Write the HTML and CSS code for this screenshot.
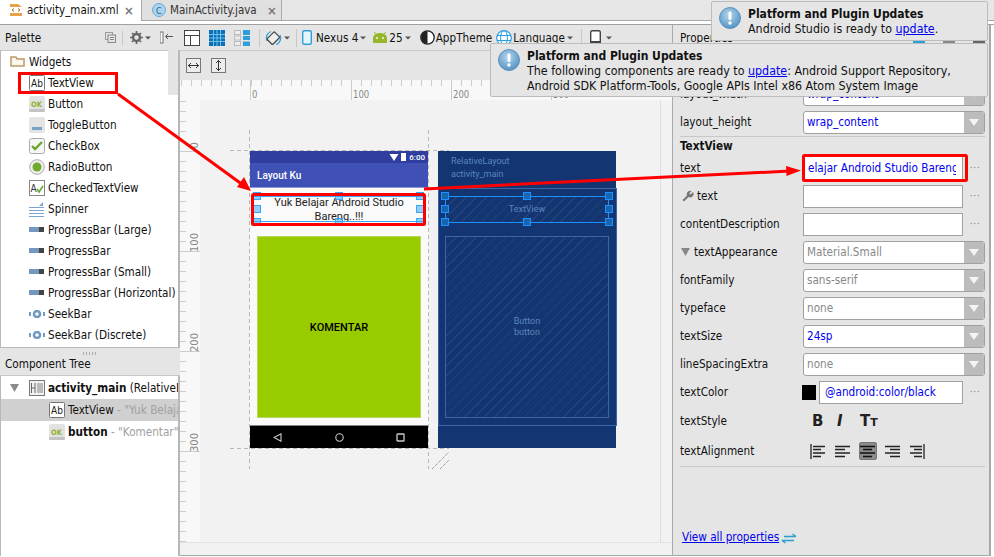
FILE: index.html
```html
<!DOCTYPE html>
<html lang="en">
<head>
<meta charset="utf-8">
<title>activity_main.xml</title>
<link rel="stylesheet" href="styles.css">
</head>
<body>
<svg class="defs" aria-hidden="true">
  <defs>
    <symbol id="i-ab" viewBox="0 0 16 16"><rect x=".5" y=".5" width="15" height="15" rx="1" fill="#fff" stroke="#777"/><text x="2" y="12" font-family="DejaVu Sans" font-size="10" fill="#222">Ab</text></symbol>
    <symbol id="i-ok" viewBox="0 0 16 16"><rect width="16" height="16" rx="2" fill="#e2e2e2"/><rect y="13" width="16" height="3" rx="1" fill="#c4c4c4"/><text x="2" y="11" font-family="DejaVu Sans" font-weight="700" font-size="7.5" fill="#8fae2c">OK</text></symbol>
    <symbol id="i-toggle" viewBox="0 0 16 16"><rect width="16" height="16" rx="2" fill="#e4e4e4"/><rect x="3" y="10" width="10" height="3" fill="#7aa0c8"/></symbol>
    <symbol id="i-check" viewBox="0 0 16 16"><rect x=".5" y=".5" width="15" height="15" rx="2" fill="#f6f6f6" stroke="#aaa"/><path d="M3 8l3 3 7-7" fill="none" stroke="#6aa82a" stroke-width="2.4"/></symbol>
    <symbol id="i-radio" viewBox="0 0 16 16"><circle cx="8" cy="8" r="7.3" fill="#efefef" stroke="#aaa"/><circle cx="8" cy="8" r="4.5" fill="#70a92c"/></symbol>
    <symbol id="i-ctv" viewBox="0 0 16 16"><rect x=".5" y=".5" width="15" height="15" fill="#fff" stroke="#888"/><text x="1.500" y="12" font-family="DejaVu Sans" font-size="10" fill="#333">A</text><path d="M8 9l2 3 4-6" fill="none" stroke="#6aa82a" stroke-width="1.600"/></symbol>
    <symbol id="i-spin" viewBox="0 0 16 16"><path d="M0 6.500h15M0 9.500h15M0 12.500h15M0 15.500h15" stroke="#7da4cc"/><path d="M10 5l4-4v4z" fill="#7da4cc"/></symbol>
    <symbol id="i-prog" viewBox="0 0 16 6"><rect width="10" height="5" fill="#7298c0"/><rect x="10" width="5" height="5" fill="#444"/></symbol>
    <symbol id="i-seek" viewBox="0 0 16 8"><path d="M1 2v4M15 2v4" stroke="#6f9ac4" stroke-width="2"/><circle cx="8" cy="4" r="3" fill="none" stroke="#6f9ac4" stroke-width="2.600"/></symbol>
    <symbol id="i-info" viewBox="0 0 22 22"><defs><radialGradient id="g-info" cx=".45" cy=".35" r=".7"><stop offset="0" stop-color="#b6d6ee"/><stop offset="1" stop-color="#4c8fc1"/></radialGradient></defs><circle cx="11" cy="11" r="10.500" fill="url(#g-info)" stroke="#5b93bd"/><rect x="9.500" y="4.500" width="3" height="8.500" rx="1.200" fill="#fff"/><circle cx="11" cy="16" r="1.700" fill="#fff"/></symbol>
    <symbol id="i-caret" viewBox="0 0 6 4"><path d="M0 .5h6L3 3.500z" fill="#555"/></symbol>
    <symbol id="i-dd" viewBox="0 0 10 7"><path d="M0 0h10L5 7z" fill="#f4f4f4"/></symbol>
  </defs>
</svg>

<div class="ide">
  <header class="tabs">
    <div class="tab tab-on">
      <svg class="tab-ico" viewBox="0 0 14 14"><path d="M1 1h8l4 3v9H1z" fill="#e8a04a"/><rect x="1" y="4" width="12" height="6" fill="#fff"/><path d="M5 5.500L3 7l2 1.500M9 5.500L11 7 9 8.500" fill="none" stroke="#b06a1c"/></svg>
      <span class="tab-name">activity_main.xml</span><span class="tab-x">×</span>
    </div>
    <div class="tab tab-off">
      <svg class="tab-ico" viewBox="0 0 14 14"><circle cx="7" cy="7" r="6.500" fill="#a9d3ef" stroke="#6aa8d6"/><text x="4" y="10.500" font-family="DejaVu Sans" font-size="9" fill="#2c5d86">C</text></svg>
      <span class="tab-name">MainActivity.java</span><span class="tab-x">×</span>
    </div>
  </header>

  <div class="work">
    <aside class="left">
      <div class="pal-head">
        <span class="head-title">Palette</span>
        <span class="pal-tools">
          <svg class="ico11" viewBox="0 0 11 11"><rect x=".5" y=".5" width="7" height="7" fill="none" stroke="#999"/><rect x="3" y="3" width="7.500" height="7.500" fill="#e5e5e5" stroke="#888"/><path d="M5 5.500h4M5 7.500h4" stroke="#888"/></svg>
          <i class="sep-short"></i>
          <svg class="ico13" viewBox="0 0 13 13"><circle cx="6.500" cy="6.500" r="3.500" fill="none" stroke="#666" stroke-width="2.500"/><path d="M6.500 0v13M0 6.500h13M2 2l9 9M11 2l-9 9" stroke="#666" stroke-width="1.700" stroke-dasharray="2.200 8.600 2.200"/></svg>
          <svg class="caret" viewBox="0 0 6 4"><use href="#i-caret"/></svg>
          <svg class="ico13 pin" viewBox="0 0 13 13"><rect x="0" y="1" width="3" height="11" fill="#fff" stroke="#777"/><path d="M13 5.500H6M8 3L5.500 5.500 8 8" fill="none" stroke="#555"/></svg>
        </span>
      </div>
      <div class="pal-body">
        <ul class="pal-list">
          <li class="pal-group"><svg class="folder" viewBox="0 0 15 11"><path d="M1 10V1h5l1 2h7v7z" fill="#fbf7ef" stroke="#bd9b66" stroke-width="1.500"/></svg>Widgets</li>
          <li><svg class="pi"><use href="#i-ab"/></svg>TextView</li>
          <li><svg class="pi"><use href="#i-ok"/></svg>Button</li>
          <li><svg class="pi"><use href="#i-toggle"/></svg>ToggleButton</li>
          <li><svg class="pi"><use href="#i-check"/></svg>CheckBox</li>
          <li><svg class="pi"><use href="#i-radio"/></svg>RadioButton</li>
          <li><svg class="pi"><use href="#i-ctv"/></svg>CheckedTextView</li>
          <li><svg class="pi"><use href="#i-spin"/></svg>Spinner</li>
          <li><svg class="pi pi-bar"><use href="#i-prog"/></svg>ProgressBar (Large)</li>
          <li><svg class="pi pi-bar"><use href="#i-prog"/></svg>ProgressBar</li>
          <li><svg class="pi pi-bar"><use href="#i-prog"/></svg>ProgressBar (Small)</li>
          <li><svg class="pi pi-bar"><use href="#i-prog"/></svg>ProgressBar (Horizontal)</li>
          <li><svg class="pi pi-seek"><use href="#i-seek"/></svg>SeekBar</li>
          <li><svg class="pi pi-seek"><use href="#i-seek"/></svg>SeekBar (Discrete)</li>
        </ul>
        <div class="pal-scroll"></div>
      </div>
      <div class="split"><span class="grip"></span></div>
      <div class="tree-head">Component Tree</div>
      <div class="tree">
        <div class="tree-row">
          <svg class="tw" viewBox="0 0 9 8"><path d="M0 0h9L4.500 8z" fill="#8a8a8a"/></svg>
          <svg class="pi" viewBox="0 0 16 16"><rect x=".5" y=".5" width="15" height="15" fill="#f2f2f2" stroke="#777"/><path d="M2.500 3v10M6 3v10M6 8H2.500" fill="none" stroke="#666"/><rect x="8" y="3" width="6" height="10" fill="#bbb"/></svg>
          <b>activity_main</b>&nbsp;(RelativeLayout)
        </div>
        <div class="tree-row sub selected"><svg class="pi"><use href="#i-ab"/></svg>TextView<span class="muted">&nbsp;- "Yuk Belajar Android Studio Bareng..!!!"</span></div>
        <div class="tree-row sub"><svg class="pi"><use href="#i-ok"/></svg><b>button</b><span class="muted">&nbsp;- "Komentar"</span></div>
      </div>
    </aside>

    <main class="center">
      <div class="toolbar">
        <svg class="tool16" viewBox="0 0 16 16"><rect x=".5" y=".5" width="15" height="15" fill="#fff" stroke="#444"/><path d="M.5 5.500h15M6.500 5.500v10" stroke="#444"/></svg>
        <svg class="tool16" viewBox="0 0 16 16"><rect width="16" height="16" fill="#0f6fb4"/><path d="M4.500 0v16M8 0v16M11.500 0v16M0 4.500h16M0 8h16M0 11.500h16" stroke="#6cc3ee"/></svg>
        <svg class="tool16" viewBox="0 0 16 16"><rect x=".5" y=".5" width="6" height="4" fill="#eee" stroke="#bbb"/><rect x=".5" y="6" width="6" height="4" fill="#eee" stroke="#bbb"/><rect x=".5" y="11.500" width="6" height="4" fill="#eee" stroke="#bbb"/><rect x="9" y="0" width="7" height="5" fill="#2e9fdc"/><rect x="9" y="6" width="7" height="4" fill="#2e9fdc"/><rect x="9" y="11.500" width="7" height="4.500" fill="#2e9fdc"/></svg>
        <i class="sep"></i>
        <svg class="rot" viewBox="0 0 17 16"><path d="M2 11A7 7 0 0 1 6 1.500M15 5a7 7 0 0 1-4 9.500" fill="none" stroke="#2a9fdc" stroke-width="1.300"/><rect x="4.500" y="3" width="8" height="10.500" rx="1" transform="rotate(45 8.500 8)" fill="#eee" stroke="#444" stroke-width="1.200"/></svg>
        <svg class="caret" viewBox="0 0 6 4"><use href="#i-caret"/></svg>
        <i class="sep"></i>
        <svg class="phone" viewBox="0 0 10 15"><rect x=".7" y=".7" width="8.600" height="13.600" rx="1.500" fill="#e8f4fb" stroke="#2a9fdc" stroke-width="1.400"/></svg>
        <span class="tool-text">Nexus 4</span>
        <svg class="caret" viewBox="0 0 6 4"><use href="#i-caret"/></svg>
        <svg class="droid" viewBox="0 0 16 11"><path d="M1 11V6a7 5 0 0 1 14 0v5z" fill="#97b62c"/><path d="M2 0l3 3M14 0l-3 3" stroke="#97b62c"/><circle cx="5" cy="6" r=".9" fill="#fff"/><circle cx="11" cy="6" r=".9" fill="#fff"/></svg>
        <span class="tool-text">25</span>
        <svg class="caret" viewBox="0 0 6 4"><use href="#i-caret"/></svg>
        <svg class="theme" viewBox="0 0 15 15"><circle cx="7.500" cy="7.500" r="6.700" fill="#fff" stroke="#222" stroke-width="1.300"/><path d="M7.500 1a6.500 6.500 0 0 0 0 13z" fill="#222"/></svg>
        <span class="tool-text">AppTheme</span>
        <svg class="globe" viewBox="0 0 16 16"><circle cx="8" cy="8" r="7.300" fill="#fff" stroke="#2a9fdc" stroke-width="1.200"/><ellipse cx="8" cy="8" rx="3.400" ry="7.300" fill="none" stroke="#2a9fdc"/><path d="M1 5.500h14M1 10.500h14" stroke="#2a9fdc"/></svg>
        <span class="tool-text">Language</span>
        <svg class="caret" viewBox="0 0 6 4"><use href="#i-caret"/></svg>
        <i class="sep sep-lang"></i>
        <svg class="device" viewBox="0 0 11 15"><rect x=".7" y=".7" width="9.600" height="13.600" rx="1.500" fill="#fff" stroke="#444" stroke-width="1.400"/><rect x="1" y="11" width="9" height="3" fill="#444"/></svg>
        <svg class="caret caret-device" viewBox="0 0 6 4"><use href="#i-caret"/></svg>
      </div>
      <div class="subbar">
        <span class="sq-btn"><svg viewBox="0 0 11 7"><path d="M0 3.500h11M3 1L.5 3.500 3 6M8 1l2.500 2.500L8 6" fill="none" stroke="#333"/></svg></span>
        <span class="sq-btn"><svg class="v" viewBox="0 0 7 11"><path d="M3.500 0v11M1 3L3.500.5 6 3M1 8l2.500 2.500L6 8" fill="none" stroke="#333"/></svg></span>
      </div>
      <div class="design">
        <div class="design-main">
          <div class="ruler-top">
            <span class="maj maj-t t0"></span><span class="maj maj-t t1"></span><span class="maj maj-t t2"></span><span class="maj maj-t t3"></span>
            <span class="rl t0">0</span><span class="rl t1">100</span><span class="rl t2">200</span><span class="rl t3">300</span>
          </div>
          <div class="ruler-left">
            <span class="maj maj-l l0"></span><span class="maj maj-l l1"></span><span class="maj maj-l l2"></span><span class="maj maj-l l3"></span>
            <span class="vl l0">0</span><span class="vl l1">100</span><span class="vl l2">200</span><span class="vl l3">300</span>
          </div>
          <div class="surface">
            <div class="dash dv d1"></div><div class="dash dv d2"></div>
            <div class="dash dh d3"></div><div class="dash dh d4"></div>
            <svg class="resize" viewBox="0 0 18 18"><path d="M0 17L17 0M8 17l9-9" stroke="#777" stroke-dasharray="1 1" fill="none"/></svg>

            <div class="phone-view">
              <div class="status">
                <svg class="wifi" viewBox="0 0 9 7"><path d="M0 0h9L4.500 7z" fill="#fff"/></svg>
                <span class="batt"></span><span class="time">6:00</span>
              </div>
              <div class="appbar">Layout Ku</div>
              <div class="pv-body">
                <div class="pv-text">Yuk Belajar Android Studio<br>Bareng..!!!</div>
                <div class="pv-btn">KOMENTAR</div>
              </div>
              <div class="navbar">
                <svg viewBox="0 0 9 9"><path d="M8 .8v7.400L1 4.500z" fill="none" stroke="#ccc" stroke-width="1.100"/></svg>
                <svg viewBox="0 0 9 9"><circle cx="4.500" cy="4.500" r="3.700" fill="none" stroke="#ccc" stroke-width="1.100"/></svg>
                <svg viewBox="0 0 9 9"><rect x="1" y="1" width="7" height="7" rx=".6" fill="none" stroke="#ccc" stroke-width="1.300"/></svg>
              </div>
              <span class="h h1"></span><span class="h h2"></span><span class="h h3"></span>
              <span class="h h4"></span><span class="h h5"></span>
              <span class="h h6"></span><span class="h h7"></span><span class="h h8"></span>
            </div>

            <div class="blue-view">
              <div class="bv-label">RelativeLayout<br>activity_main</div>
              <div class="bv-root"></div>
              <div class="bv-text">TextView</div>
              <div class="bv-btn">Button<br>button</div>
              <span class="b b1"></span><span class="b b2"></span><span class="b b3"></span>
              <span class="b b4"></span><span class="b b5"></span>
              <span class="b b6"></span><span class="b b7"></span><span class="b b8"></span>
            </div>
          </div>
          <div class="vscroll"></div>
        </div>
        <div class="hscroll"></div>
      </div>
    </main>

    <aside class="props">
      <div class="props-head">
        <span class="head-title">Properties</span>
        <span class="props-tools">
          <svg viewBox="0 0 12 12"><path d="M0 10h12" stroke="#2a9fdc" stroke-width="2"/></svg>
          <svg viewBox="0 0 12 12"><path d="M0 10h12" stroke="#888" stroke-width="2"/></svg>
          <svg viewBox="0 0 12 12"><path d="M0 10h12" stroke="#666" stroke-width="2"/></svg>
        </span>
      </div>
      <div class="prop-row"><label>layout_width</label><div class="sel"><span class="val blue">wrap_content</span><span class="dd"><svg viewBox="0 0 10 7"><use href="#i-dd"/></svg></span></div></div>
      <div class="prop-row"><label>layout_height</label><div class="sel"><span class="val blue">wrap_content</span><span class="dd"><svg viewBox="0 0 10 7"><use href="#i-dd"/></svg></span></div></div>
      <div class="prop-title">TextView</div>
      <div class="prop-row"><label>text</label><div class="inp on"><span class="val blue"><u>elajar</u> Android Studio <u>Bareng</u></span></div><span class="more">···</span></div>
      <div class="prop-row"><label><svg class="wrench" viewBox="0 0 12 12"><path d="M11 2L8.500 4.500 7.200 3.500 9.500 1A3.500 3.500 0 0 0 5 5.500L.5 10l1.500 1.500L6.500 7A3.500 3.500 0 0 0 11 2z" fill="#777"/></svg>text</label><div class="inp"></div><span class="more">···</span></div>
      <div class="prop-row"><label>contentDescription</label><div class="inp"></div><span class="more">···</span></div>
      <div class="prop-row"><label><svg class="tw2" viewBox="0 0 9 8"><path d="M0 0h9L4.500 8z" fill="#888"/></svg>textAppearance</label><div class="sel"><span class="val grey">Material.Small</span><span class="dd"><svg viewBox="0 0 10 7"><use href="#i-dd"/></svg></span></div></div>
      <div class="prop-row"><label>fontFamily</label><div class="sel"><span class="val grey">sans-serif</span><span class="dd"><svg viewBox="0 0 10 7"><use href="#i-dd"/></svg></span></div></div>
      <div class="prop-row"><label>typeface</label><div class="sel"><span class="val grey">none</span><span class="dd"><svg viewBox="0 0 10 7"><use href="#i-dd"/></svg></span></div></div>
      <div class="prop-row"><label>textSize</label><div class="sel"><span class="val blue">24sp</span><span class="dd"><svg viewBox="0 0 10 7"><use href="#i-dd"/></svg></span></div></div>
      <div class="prop-row"><label>lineSpacingExtra</label><div class="sel"><span class="val grey">none</span><span class="dd"><svg viewBox="0 0 10 7"><use href="#i-dd"/></svg></span></div></div>
      <div class="prop-row"><label>textColor</label><span class="swatch"></span><div class="inp color"><span class="val blue">@android:color/black</span></div><span class="more">···</span></div>
      <div class="prop-row style-row"><label>textStyle</label>
        <span class="style-btns">
          <span class="s-b">B</span><span class="s-i">I</span><span class="s-t">T<small>T</small></span>
        </span>
      </div>
      <div class="prop-row align-row"><label>textAlignment</label>
        <span class="aligns">
          <svg viewBox="0 0 15 15"><path d="M1 0v15M3 2.500h12M3 5.500h8M3 9h12M3 12.500h8" stroke="#222" stroke-width="1.300"/></svg>
          <svg viewBox="0 0 15 15"><path d="M0 2.500h15M0 5.500h10M0 9h15M0 12.500h10" stroke="#222" stroke-width="1.300"/></svg>
          <span class="al-on"><svg viewBox="0 0 15 15"><path d="M0 2.500h15M3 5.500h9M0 9h15M3 12.500h9" stroke="#111" stroke-width="1.600"/></svg></span>
          <svg viewBox="0 0 15 15"><path d="M0 2.500h15M5 5.500h10M0 9h15M5 12.500h10" stroke="#222" stroke-width="1.300"/></svg>
          <svg viewBox="0 0 15 15"><path d="M14 0v15M0 2.500h12M4 5.500h8M0 9h12M4 12.500h8" stroke="#222" stroke-width="1.300"/></svg>
        </span>
      </div>
      <div class="prop-end">
        <a class="link">View all properties</a>
        <svg class="swap" viewBox="0 0 16 11"><path d="M3 3.500h12M11.500 1L15 3.500M13 7.500H1M4.500 10L1 7.500" fill="none" stroke="#2a9fd0" stroke-width="1.500"/></svg>
      </div>
    </aside>
  </div>

  <div class="note note-a">
    <svg class="note-ico"><use href="#i-info"/></svg>
    <div><b>Platform and Plugin Updates</b><br>Android Studio is ready to <a class="link">update</a>.</div>
  </div>
  <div class="note note-b">
    <svg class="note-ico"><use href="#i-info"/></svg>
    <div><b>Platform and Plugin Updates</b><br>The following components are ready to <a class="link">update</a>: Android Support Repository,<br>Android SDK Platform-Tools, Google APIs Intel x86 Atom System Image</div>
  </div>

  <svg class="marks" viewBox="0 0 994 557">
    <rect x="19.500" y="73.500" width="97" height="19" fill="none" stroke="#f00" stroke-width="3"/>
    <rect x="252.500" y="194.500" width="172" height="30" fill="none" stroke="#f00" stroke-width="3" rx="1"/>
    <rect x="803.500" y="155.500" width="163" height="25" fill="none" stroke="#f00" stroke-width="3" rx="1"/>
    <path d="M118 94L243 185" stroke="#f00" stroke-width="3"/>
    <path d="M251 191L237 187 244 177z" fill="#f00"/>
    <path d="M424 189L790 171" stroke="#f00" stroke-width="3"/>
    <path d="M801 170.500L786 166 786.500 176z" fill="#f00"/>
  </svg>
</div>
</body>
</html>
```

FILE: styles.css
```css
* { box-sizing: border-box; }
html, body { margin: 0; height: 100%; }
body { font-family: "DejaVu Sans Condensed", "DejaVu Sans", sans-serif; font-stretch: condensed; font-size: 11.650px; color: #111; overflow: hidden; }
.defs { position: absolute; width: 0; height: 0; }
ul { list-style: none; margin: 0; padding: 0; }
svg { display: block; flex: none; }

.ide { position: relative; width: 994px; height: 557px; background: #fff; display: flex; flex-direction: column; }

/* tab strip */
.tabs { height: 25px; flex: none; display: flex; align-items: flex-start; background: linear-gradient(#e6e6e6 0 20px, #a8a8a8 20px 21px, #fff 21px 24px, #a0a0a0 24px); }
.tab { height: 21px; width: 141px; display: flex; align-items: center; padding-left: 9px; font-size: 11.500px; }
.tab-on { background: #fff; height: 24px; padding-bottom: 4px; }
.tab-off { background: #e0e0e0; border-left: 1px solid #aaa; border-right: 1px solid #aaa; border-bottom: 1px solid #a8a8a8; color: #333; padding-left: 10px; }
.tab-ico { width: 14px; height: 14px; margin-right: 4px; }
.tab-name { width: 97px; white-space: nowrap; }
.tab-x { color: #777; font-size: 13px; font-weight: 700; }

.work { flex: 1; display: flex; min-height: 0; padding-bottom: 1px; }

/* left column */
.left { width: 180px; flex: none; display: flex; flex-direction: column; background: #e5e5e5; }
.pal-head { height: 25px; flex: none; display: flex; align-items: center; justify-content: space-between; padding: 0 7px 0 5px; }
.pal-tools { display: flex; align-items: center; }
.ico11 { width: 11px; height: 11px; }
.ico13 { width: 13px; height: 13px; }
.pin { margin-left: 9px; }
.sep-short { width: 1px; height: 14px; background: #c8c8c8; margin: 0 7px 0 6px; }
.caret { width: 6px; height: 4px; margin-left: 2px; }
.pal-body { height: 297px; flex: none; display: flex; background: #fff; border-left: 1px solid #b8b8b8; border-right: 2px solid #b8b8b8; border-top: 1px solid #c8c8c8; }
.pal-list { flex: 1; min-width: 0; }
.pal-list li { height: 21px; display: flex; align-items: center; padding-left: 28px; white-space: nowrap; color: #111; }
.pal-list .pal-group { padding-left: 9px; }
.folder { width: 15px; height: 11px; margin-right: 4px; }
.pi { width: 16px; height: 16px; margin-right: 3px; }
.pi-bar { height: 6px; }
.pi-seek { height: 8px; }
.pal-scroll { width: 10px; height: 45px; background: #e4e4e4; position: absolute; left: 168px; top: 50px; }
.split { height: 11px; flex: none; display: flex; justify-content: center; align-items: center; background: #e5e5e5; border-top: 1px solid #bbb; }
.grip { width: 14px; height: 3px; background: repeating-linear-gradient(90deg, #aaa 0 1px, transparent 1px 3px); }
.tree-head { height: 17px; flex: none; padding-left: 5px; line-height: 13px; }
.tree { flex: 1; background: #fff; border-left: 1px solid #b8b8b8; border-right: 2px solid #b8b8b8; border-top: 1px solid #c8c8c8; overflow: hidden; padding-top: 1px; }
.tree-row { height: 22px; display: flex; align-items: center; padding-left: 9px; white-space: nowrap; }
.tree-row.sub { padding-left: 48px; }
.tree-row.selected { background: #d0d0d0; }
.tw { width: 9px; height: 8px; margin-right: 10px; }
.muted { color: #a0a0a0; }

/* center */
.center { flex: 1; min-width: 0; display: flex; flex-direction: column; border-right: 1px solid #aaa; background: #e5e5e5; }
.toolbar { height: 25px; flex: none; display: flex; align-items: center; padding-left: 4px; }
.tool16 { width: 16px; height: 16px; margin-right: 9px; }
.sep { width: 1px; height: 18px; background: #c8c8c8; margin-right: 5px; }
.rot { width: 17px; height: 16px; }
.toolbar .caret { margin-left: 2px; margin-right: 6px; }
.phone { width: 10px; height: 15px; margin-right: 4px; }
.tool-text { white-space: nowrap; }
.droid { width: 16px; height: 11px; margin-right: 1px; }
.theme { width: 15px; height: 15px; margin-left: 3px; margin-right: 1px; }
.globe { width: 16px; height: 16px; margin-left: 4px; margin-right: 1px; }
.sep-lang { margin-left: 2px; margin-right: 8px; }
.device { width: 11px; height: 15px; }
.toolbar .caret-device { margin-left: 5px; }

.subbar { height: 30px; flex: none; display: flex; align-items: center; gap: 10px; padding: 0 0 0 6px; border-top: 1px solid #c8c8c8; }
.sq-btn { width: 15px; height: 15px; border: 1px solid #777; background: #ececec; display: flex; align-items: center; justify-content: center; }
.sq-btn svg { width: 11px; height: 7px; }
.sq-btn svg.v { width: 7px; height: 11px; }

.design { flex: 1; min-height: 0; display: flex; flex-direction: column; background: #f2f2f2; }
.design-main { flex: 1; min-height: 0; display: grid; grid-template-columns: 20px 1fr 12px; grid-template-rows: 20px minmax(0, 1fr); }
.ruler-top { grid-column: 1 / 4; grid-row: 1; position: relative; background: repeating-linear-gradient(90deg, #ccc 0 1px, transparent 1px 10px) 1px 0 / 100% 6px no-repeat, #f8f8f8; overflow: hidden; }
.ruler-left { grid-column: 1; grid-row: 2; position: relative; background: repeating-linear-gradient(180deg, #ccc 0 1px, transparent 1px 10px) 0 1px / 6px 100% no-repeat, #f8f8f8; overflow: hidden; }
.maj { position: absolute; background: #ccc; }
.maj-t { width: 1px; top: 0; height: 20px; }
.maj-l { height: 1px; left: 0; width: 20px; }
.rl { position: absolute; top: 9px; font-size: 10px; line-height: 11px; color: #888; margin-left: 2px; font-family: "DejaVu Sans", sans-serif; font-stretch: normal; transform: scaleX(.85); transform-origin: left; }
.maj-t.t0 { left: 70px; } .maj-t.t1 { left: 171px; } .maj-t.t2 { left: 271px; } .maj-t.t3 { left: 371px; }
.rl.t0 { left: 70px; } .rl.t1 { left: 171px; } .rl.t2 { left: 271px; } .rl.t3 { left: 371px; }
.vl { position: absolute; left: 10px; writing-mode: vertical-rl; transform: rotate(180deg); font-size: 10px; line-height: 10px; color: #888; font-family: "DejaVu Sans", sans-serif; font-stretch: normal; }
.maj-l.l0 { top: 51px; } .maj-l.l1 { top: 151px; } .maj-l.l2 { top: 251px; } .maj-l.l3 { top: 351px; }
.vl.l0 { top: 42px; } .vl.l1 { top: 133px; } .vl.l2 { top: 233px; } .vl.l3 { top: 333px; }

.surface { grid-column: 2; grid-row: 2; position: relative; overflow: hidden; background: #f2f2f2; }
.vscroll { grid-column: 3; grid-row: 2; border-left: 1px solid #dedede; background: #f2f2f2; }
.hscroll { height: 14px; flex: none; border-top: 1px solid #e2e2e2; border-bottom: 1px solid #a8a8a8; background: #f2f2f2; }

.dash { position: absolute; }
.dv { width: 1px; top: 30px; height: 339px; background: repeating-linear-gradient(180deg, #b8b8b8 0 4px, transparent 4px 7px); }
.dh { height: 1px; left: 30px; width: 219px; background: repeating-linear-gradient(90deg, #b8b8b8 0 4px, transparent 4px 7px); }
.d1 { left: 49px; } .d2 { left: 228px; } .d3 { top: 50px; } .d4 { top: 348px; }
.resize { position: absolute; left: 232px; top: 352px; width: 18px; height: 18px; }

.phone-view { position: absolute; left: 50px; top: 51px; width: 178px; height: 297px; display: flex; flex-direction: column; background: #fafafa; font-family: Roboto, sans-serif; font-stretch: normal; }
.status { height: 12px; flex: none; background: #303f9f; display: flex; align-items: center; justify-content: flex-end; gap: 2px; padding-right: 3px; color: #fff; font-size: 8px; font-weight: 500; }
.wifi { width: 10px; height: 7px; }
.batt { width: 5px; height: 8px; background: #fff; }
.time { margin-left: 1px; }
.appbar { height: 25px; flex: none; background: #3f51b5; border-bottom: 1px solid #8c96d2; color: #fff; font-size: 10px; font-weight: 500; display: flex; align-items: center; padding-left: 7px; }
.pv-body { flex: 1; min-height: 0; display: flex; flex-direction: column; align-items: center; }
.pv-text { width: 172px; margin-top: 8px; height: 26px; font-size: 11px; line-height: 13.500px; color: #222; text-align: center; outline: 1px solid #38a8f4; outline-offset: -1px; }
.pv-btn { width: 164px; margin-top: 14px; height: 182px; background: #99cc00; border: 1px solid #b8d85c; color: #000; font-size: 11px; font-weight: 500; display: flex; align-items: center; justify-content: center; }
.navbar { height: 23px; flex: none; background: #000; border-top: 1px solid #888; display: flex; align-items: center; justify-content: space-between; padding: 0 23px; }
.navbar svg { width: 9px; height: 9px; }

.h { position: absolute; width: 8px; height: 8px; background: rgba(60,170,250,.55); border: 1px solid #38a8f4; }
.h1 { left: 3px; top: 41px; } .h2 { left: 85px; top: 41px; } .h3 { left: 166px; top: 41px; }
.h4 { left: 3px; top: 54px; } .h5 { left: 166px; top: 54px; }
.h6 { left: 3px; top: 67px; } .h7 { left: 85px; top: 67px; } .h8 { left: 166px; top: 67px; }

.blue-view { position: absolute; left: 238px; top: 51px; width: 178px; height: 297px; background: #133572; font-family: Roboto, sans-serif; font-stretch: normal; color: #5b86bd; font-size: 9px; }
.bv-label { position: absolute; left: 13px; top: 4px; line-height: 12.500px; }
.bv-root { position: absolute; left: 0; top: 37px; width: 179px; height: 238px; border: 1px solid #3b66a6; }
.bv-text, .bv-btn { position: absolute; left: 7px; width: 164px; display: flex; align-items: center; justify-content: center; text-align: center; line-height: 11px; background: repeating-linear-gradient(135deg, #234378 0 1px, transparent 1px 7px); }
.bv-text { top: 45px; height: 27px; border: 1px solid #1e90ff; }
.bv-btn { top: 85px; height: 182px; border: 1px solid #3b66a6; }
.b { position: absolute; width: 8px; height: 8px; background: #1565b0; border: 1px solid #1e90ff; }
.b1 { left: 3px; top: 41px; } .b2 { left: 85px; top: 41px; } .b3 { left: 167px; top: 41px; }
.b4 { left: 3px; top: 54px; } .b5 { left: 167px; top: 54px; }
.b6 { left: 3px; top: 67px; } .b7 { left: 85px; top: 67px; } .b8 { left: 167px; top: 67px; }

/* properties */
.props { width: 318px; flex: none; display: flex; flex-direction: column; background: #e5e5e5; border-right: 2px solid #a8a8a8; border-bottom: 1px solid #a8a8a8; padding: 0 4px 0 7px; margin-right: 3px; }
.props-head { height: 25px; flex: none; display: flex; align-items: center; justify-content: space-between; margin-bottom: 30px; }
.props-tools { display: flex; gap: 18px; }
.props-tools svg { width: 12px; height: 12px; }
.prop-row { height: 28px; flex: none; display: flex; align-items: center; }
.prop-row label { width: 123px; flex: none; display: flex; align-items: center; white-space: nowrap; }
.sel, .inp { height: 23px; display: flex; align-items: center; background: #fff; border: 1px solid #a0a0a0; }
.sel { width: 182px; border-radius: 3px; overflow: hidden; }
.inp { width: 160px; }
.inp.on { height: 24px; }
.inp.color { width: 144px; margin-left: 3px; padding-left: 2px; }
.val { flex: 1; min-width: 0; padding-left: 3px; white-space: nowrap; overflow: hidden; }
.inp.on .val { margin-right: 6px; padding-left: 4px; }
.blue { color: #0000ee; }
.grey { color: #888; }
u { text-decoration: underline wavy #7fbf7f 1px; text-underline-offset: 2px; }
.dd { width: 20px; align-self: stretch; flex: none; background: #bcbcbc; display: flex; align-items: center; justify-content: center; }
.dd svg { width: 10px; height: 7px; }
.more { margin-left: 7px; color: #666; font-family: "DejaVu Sans", sans-serif; font-stretch: normal; font-size: 8px; letter-spacing: 1px; }
.prop-title { height: 18px; flex: none; font-weight: 700; border-top: 1px solid #c8c8c8; display: flex; align-items: center; }
.wrench { width: 12px; height: 12px; margin-right: 3px; margin-left: 2px; }
.tw2 { width: 9px; height: 8px; margin-right: 4px; margin-left: 1px; }
.swatch { width: 14px; height: 15px; margin-left: -1px; background: #000; flex: none; }
.style-row { height: 30px; }
.style-btns { display: flex; align-items: center; margin-left: 9px; font-family: "DejaVu Sans", sans-serif; font-weight: 700; font-size: 15px; color: #222; font-stretch: normal; }
.s-b { width: 25px; }
.s-i { width: 23px; font-style: italic; }
.s-t small { font-size: 11px; }
.align-row { height: 30px; }
.aligns { display: flex; align-items: center; gap: 10px; margin-left: 7px; }
.aligns svg { width: 15px; height: 15px; }
.al-on { width: 18px; height: 18px; background: #8a8a8a; border: 1px solid #777; border-radius: 2px; display: flex; align-items: center; justify-content: center; margin: 0 -1.500px; }
.prop-end { flex: 1; border-top: 1px solid #c8c8c8; display: flex; align-items: flex-end; padding: 0 0 11px 2px; gap: 2px; }
.link { color: #0000ee; text-decoration: underline; }
.swap { width: 16px; height: 11px; }

/* notifications */
.note { position: absolute; display: flex; background: #e5e5e5; border: 1px solid #bcbcbc; border-radius: 2px; font-size: 12.350px; line-height: 15px; color: #111; }
.note b { font-size: 12px; }
.note-ico { width: 22px; height: 22px; margin-right: 7px; flex: none; }
.note-a { left: 711px; top: 1px; width: 277px; height: 40px; padding: 5px 0 0 7px; }
.note-b { left: 490px; top: 43px; width: 498px; height: 54px; padding: 5px 0 0 7px; }

.marks { position: absolute; left: 0; top: 0; width: 994px; height: 557px; pointer-events: none; }
```
